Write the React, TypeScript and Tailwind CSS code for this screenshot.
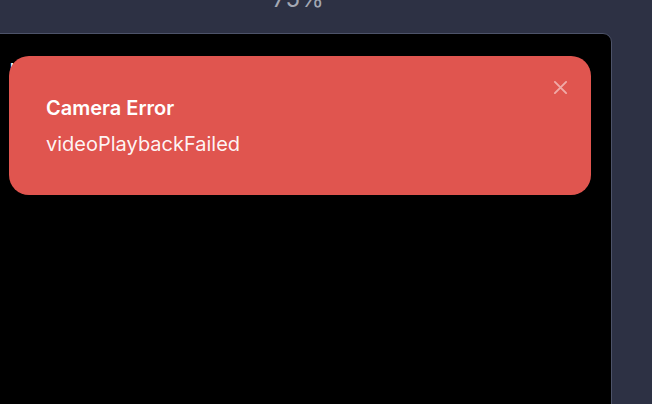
import React from "react";

export default function App() {
  return (
    <div
      className="w-[652px] h-[404px] overflow-hidden bg-[#2d3144] flex flex-col"
      style={{ fontFamily: "Inter, 'Noto Sans', sans-serif" }}
    >
      <div className="h-[33px] flex justify-center items-end">
        <span className="text-[24px] leading-none text-[#a3a7b3] -mb-[2px] ml-[-56px] relative top-[-24px]">
          75%
        </span>
      </div>
      <div className="flex-1 flex">
        <div className="relative w-[622px] -ml-[10px] bg-black border-[1.5px] border-[#4d5369] rounded-tr-[9px] mb-[-20px]">
          <div className="pt-[27px] pl-[19px] text-white text-[15px] font-semibold leading-none">Live</div>
          <div className="absolute left-[18px] top-[22px] w-[582px] h-[139px] rounded-[20px] bg-[#e0554f] px-[37px] pt-[38px]">
            <div className="text-white font-semibold text-[20px] leading-[28px]">Camera Error</div>
            <div className="text-white/95 text-[20px] leading-[28px] mt-[8px]">videoPlaybackFailed</div>
            <button className="absolute right-[23px] top-[24px] w-[15px] h-[15px] text-white/50">
              <svg viewBox="0 0 16 16" width="15" height="15" fill="none" stroke="currentColor" strokeWidth="2" strokeLinecap="round">
                <path d="M2 2 L14 14 M14 2 L2 14" />
              </svg>
            </button>
          </div>
        </div>
      </div>
    </div>
  );
}
